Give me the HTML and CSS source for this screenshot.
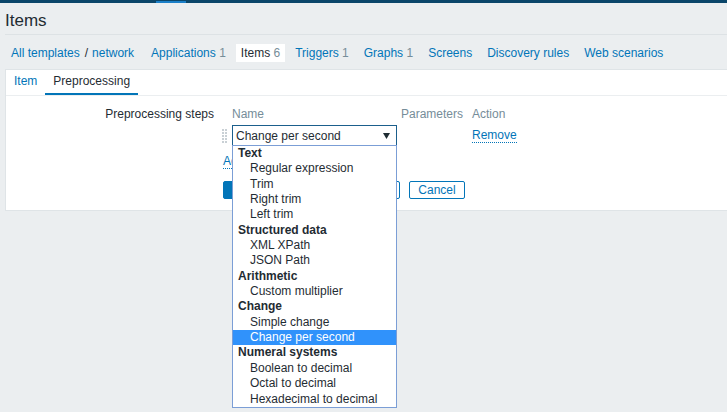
FILE: index.html
```html
<!DOCTYPE html>
<html lang="en">
<head>
<meta charset="utf-8">
<title>Items</title>
<link rel="stylesheet" href="styles.css">
</head>
<body>
<div class="topbar"><span class="topbar-mark"></span></div>
<main class="page">
  <header class="page-title"><h1>Items</h1></header>
  <nav class="subnav">
    <span class="crumbs"><a class="link-plain">All templates</a><span class="sep">/</span><a class="link-plain">network</a></span>
    <a class="nav-item">Applications <span class="count">1</span></a>
    <span class="nav-item active">Items <span class="count">6</span></span>
    <a class="nav-item">Triggers <span class="count">1</span></a>
    <a class="nav-item">Graphs <span class="count">1</span></a>
    <a class="nav-item">Screens</a>
    <a class="nav-item">Discovery rules</a>
    <a class="nav-item">Web scenarios</a>
  </nav>
  <section class="panel">
    <div class="tabs">
      <a class="tab">Item</a>
      <span class="tab active">Preprocessing</span>
    </div>
    <div class="form">
      <div class="form-label">Preprocessing steps</div>
      <div class="form-field">
        <div class="steps">
          <span></span>
          <span class="th">Name</span>
          <span class="th">Parameters</span>
          <span class="th">Action</span>

          <span class="drag">
            <svg width="5" height="14" viewBox="0 0 5 14">
              <g fill="#c9d0d5">
                <rect x="0" y="0" width="2" height="2"/><rect x="3" y="0" width="2" height="2"/>
                <rect x="0" y="3" width="2" height="2"/><rect x="3" y="3" width="2" height="2"/>
                <rect x="0" y="6" width="2" height="2"/><rect x="3" y="6" width="2" height="2"/>
                <rect x="0" y="9" width="2" height="2"/><rect x="3" y="9" width="2" height="2"/>
                <rect x="0" y="12" width="2" height="2"/><rect x="3" y="12" width="2" height="2"/>
              </g>
            </svg>
          </span>
          <div class="select-wrap">
            <div class="select">
              <span>Change per second</span>
              <svg class="arrow" width="7" height="6" viewBox="0 0 7 6"><path d="M0 0H7L3.5 6Z" fill="#1f2c33"/></svg>
            </div>
          </div>
          <span></span>
          <a class="link">Remove</a>
        </div>
        <div class="add-row"><a class="link">Add</a></div>
        <div class="buttons">
          <button class="btn primary btn-update">Update</button>
          <button class="btn btn-clone">Clone</button>
          <button class="btn btn-delete">Delete</button>
          <button class="btn btn-cancel">Cancel</button>
        </div>
      </div>
    </div>
  </section>
</main>
<ul class="dropdown">
  <li class="group">Text</li>
  <li class="opt">Regular expression</li>
  <li class="opt">Trim</li>
  <li class="opt">Right trim</li>
  <li class="opt">Left trim</li>
  <li class="group">Structured data</li>
  <li class="opt">XML XPath</li>
  <li class="opt">JSON Path</li>
  <li class="group">Arithmetic</li>
  <li class="opt">Custom multiplier</li>
  <li class="group">Change</li>
  <li class="opt">Simple change</li>
  <li class="opt selected">Change per second</li>
  <li class="group">Numeral systems</li>
  <li class="opt">Boolean to decimal</li>
  <li class="opt">Octal to decimal</li>
  <li class="opt">Hexadecimal to decimal</li>
</ul>
</body>
</html>
```

FILE: styles.css
```css
* { box-sizing: border-box; }

html, body {
  margin: 0;
  padding: 0;
  background: #ebeef0;
  font-family: "Liberation Sans", Arial, sans-serif;
  font-size: 12px;
  color: #1f2c33;
}

body {
  position: relative;
  min-height: 412px;
}

.topbar {
  height: 3px;
  background: #0a466a;
  display: flex;
  align-items: flex-end;
  padding-left: 156px;
}

.topbar-mark {
  display: block;
  width: 30px;
  height: 2px;
  background: #1a7fc8;
}

.page {
  padding-left: 5px;
}

.page-title {
  padding: 6px 0 1px;
  border-bottom: 1px solid #dde2e5;
}

.page-title h1 {
  margin: 0;
  font-size: 17px;
  font-weight: normal;
  line-height: 24px;
  color: #1f2c33;
}

.subnav {
  display: flex;
  align-items: center;
  padding: 9px 0 7px 1px;
  line-height: 18px;
  gap: 5px;
}

.crumbs {
  display: flex;
  padding: 0 7px 0 5px;
}

.link-plain, .nav-item {
  color: #0275b8;
  text-decoration: none;
}

.sep {
  color: #1f2c33;
  margin: 0 4px 0 5px;
}

.nav-item {
  padding: 0 5px;
  height: 18px;
}

.nav-item.active {
  background: #ffffff;
  color: #1f2c33;
}

.count {
  color: #768d99;
}

.panel {
  background: #ffffff;
  border: 1px solid #dfe4e7;
  border-right: none;
}

.tabs {
  display: flex;
  border-bottom: 1px solid #ebeef0;
}

.tab {
  padding: 0 8px;
  line-height: 23px;
  border-bottom: 2px solid transparent;
  color: #0275b8;
}

.tab.active {
  color: #1f2c33;
  border-bottom-color: #0275b8;
}

.form {
  display: grid;
  grid-template-columns: 208px auto;
  column-gap: 8px;
  padding: 9px 0 11px;
}

.form-label {
  text-align: right;
  line-height: 18px;
}

.steps {
  display: grid;
  grid-template-columns: 10px 169px 71px auto;
  grid-template-rows: 18px 21px;
  row-gap: 2px;
  align-items: center;
}

.th {
  color: #768d99;
  line-height: 18px;
}

.drag {
  display: flex;
  align-items: center;
  height: 21px;
}

.select-wrap {
  width: 165px;
  height: 21px;
}

.select {
  display: flex;
  align-items: center;
  justify-content: space-between;
  height: 21px;
  padding: 0 6px 0 3px;
  border: 1px solid #1b5f8c;
  background: #ffffff;
}

.dropdown {
  position: absolute;
  top: 145px;
  left: 232px;
  width: 165px;
  margin: 0;
  padding: 0;
  list-style: none;
  background: #ffffff;
  border: 1px solid #7b9ed6;
  z-index: 5;
}

.dropdown li {
  line-height: 15.35px;
  height: 15.35px;
  white-space: nowrap;
}

.dropdown .group {
  font-weight: bold;
  padding-left: 5px;
}

.dropdown .opt {
  padding-left: 17px;
}

.dropdown .selected {
  background: #3092fb;
  color: #ffffff;
}

.link {
  color: #0275b8;
  text-decoration: none;
  border-bottom: 1px dotted #0275b8;
  line-height: 14px;
  justify-self: start;
}

.add-row {
  margin-top: 6px;
  margin-left: 1px;
  height: 18px;
  display: flex;
  align-items: center;
}

.buttons {
  display: flex;
  gap: 9px;
  margin-top: 11px;
  margin-left: 1px;
}

.btn {
  font-family: "Liberation Sans", Arial, sans-serif;
  font-size: 12px;
  height: 18px;
  line-height: 16px;
  padding: 0;
  text-align: center;
  border: 1px solid #0275b8;
  border-radius: 2px;
  background: #ffffff;
  color: #0275b8;
}

.btn.primary {
  background: #0275b8;
  color: #ffffff;
}

.btn-update { width: 58px; }
.btn-clone { width: 51px; }
.btn-delete { width: 50px; }
.btn-cancel { width: 56px; }
```
